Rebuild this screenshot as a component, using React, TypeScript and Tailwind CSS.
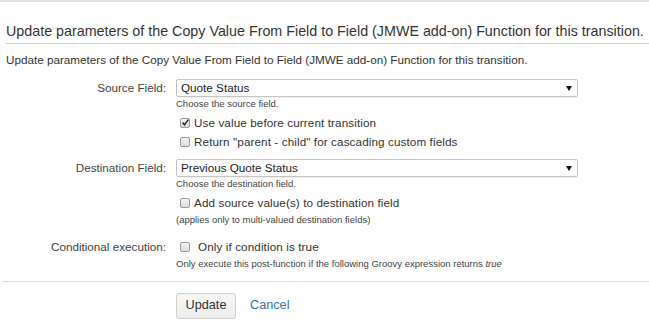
import React from "react";

function Box({ checked }: { checked?: boolean }) {
  return (
    <span className="relative inline-block w-[10px] h-[10px] shrink-0 rounded-[2px] border border-[#9a9a9a] bg-gradient-to-b from-[#f4f4f4] to-[#dcdcdc]">
      {checked && (
        <svg viewBox="0 0 10 10" className="absolute left-[0px] top-[-1px] w-[9px] h-[9px]">
          <path d="M1.8 5.2 L3.9 7.4 L8.2 1.8" fill="none" stroke="#333" strokeWidth="1.8" />
        </svg>
      )}
    </span>
  );
}

function Select({ value }: { value: string }) {
  return (
    <div className="w-[402px] h-[18px] border border-[#c4c4c4] rounded-[2px] bg-white flex items-center justify-between pl-[4px] pr-[5px] shadow-[0_1px_1px_rgba(0,0,0,0.06)]">
      <span className="text-[11.7px] leading-[16px] text-[#222]">{value}</span>
      <svg viewBox="0 0 6 5" className="w-[6px] h-[5px]">
        <path d="M0 0 H6 L3 5 Z" fill="#111" />
      </svg>
    </div>
  );
}

function CheckRow({ checked, label, gap = "gap-[4px]" }: { checked?: boolean; label: string; gap?: string }) {
  return (
    <div className={`flex items-center h-[19px] pl-[4px] ${gap}`}>
      <Box checked={checked} />
      <span className="text-[11.7px] leading-[14px] text-[#333] tracking-[0.1px]">{label}</span>
    </div>
  );
}

export default function App() {
  return (
    <div className="w-[649px] h-[333px] overflow-hidden bg-white border-t-2 border-[#e4e4e4] text-[#333] font-['Liberation_Sans',Arial,sans-serif]">
      <div className="pl-[5px]">
        <div className="pt-[21px] pb-[3px] border-b border-[#d0d0d0]">
          <h2 className="pl-[1px] text-[14.3px] leading-[17px] font-normal text-[#333]">
            Update parameters of the Copy Value From Field to Field (JMWE add-on) Function for this transition.
          </h2>
        </div>
        <p className="mt-[9px] pl-[1px] text-[11.7px] leading-[14px] text-[#333]">
          Update parameters of the Copy Value From Field to Field (JMWE add-on) Function for this transition.
        </p>
      </div>

      {/* Source field */}
      <div className="mt-[12px] flex gap-[10px]">
        <div className="w-[166px] text-right text-[11.7px] leading-[18px] text-[#444]">Source Field:</div>
        <div className="flex flex-col">
          <Select value="Quote Status" />
          <div className="pt-[1px] text-[9.5px] leading-[12px] text-[#444]">Choose the source field.</div>
          <div className="mt-[3px]">
            <CheckRow checked label="Use value before current transition" />
            <CheckRow label={'Return "parent - child" for cascading custom fields'} />
          </div>
        </div>
      </div>

      {/* Destination field */}
      <div className="mt-[8px] flex gap-[10px]">
        <div className="w-[166px] text-right text-[11.7px] leading-[18px] text-[#444]">Destination Field:</div>
        <div className="flex flex-col">
          <Select value="Previous Quote Status" />
          <div className="pt-[1px] text-[9.5px] leading-[12px] text-[#444]">Choose the destination field.</div>
          <div className="mt-[3px]">
            <CheckRow label="Add source value(s) to destination field" />
          </div>
          <div className="mt-[2px] text-[9.5px] leading-[12px] text-[#444]">
            (applies only to multi-valued destination fields)
          </div>
        </div>
      </div>

      {/* Conditional */}
      <div className="mt-[11px] flex gap-[10px]">
        <div className="w-[166px] text-right text-[11.7px] leading-[19px] text-[#444]">Conditional execution:</div>
        <div className="flex flex-col">
          <CheckRow label="Only if condition is true" gap="gap-[8px]" />
          <div className="mt-[2px] text-[9.5px] leading-[12px] text-[#444]">
            Only execute this post-function if the following Groovy expression returns <i>true</i>
          </div>
        </div>
      </div>

      <div className="mt-[11px] ml-[2px] border-t border-[#dedede]" />

      <div className="mt-[11px] pl-[176px] flex items-center gap-[14px]">
        <button className="h-[26px] w-[60px] rounded-[3px] border border-[#cfcfcf] bg-gradient-to-b from-[#f7f7f7] to-[#eeeeee] text-[12.7px] text-[#333] font-['Liberation_Sans',Arial,sans-serif]">
          Update
        </button>
        <a className="text-[12.7px] text-[#3572b0] cursor-pointer">Cancel</a>
      </div>
    </div>
  );
}
